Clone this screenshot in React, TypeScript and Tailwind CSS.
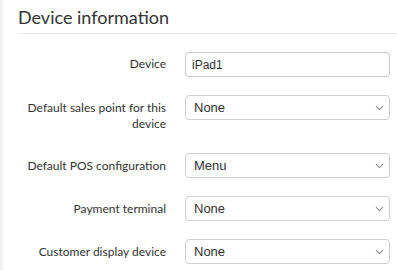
import React from "react";

const selectFields = [
  { label: "Default sales point for this device", value: "None" },
  { label: "Default POS configuration", value: "Menu" },
  { label: "Payment terminal", value: "None" },
  { label: "Customer display device", value: "None" },
];

const Chevron: React.FC = () => (
  <svg width="9" height="6" viewBox="0 0 9 6" className="shrink-0">
    <path d="M1 1.2 L4.5 4.6 L8 1.2" fill="none" stroke="#8a8a8a" strokeWidth="1.1" />
  </svg>
);

const App: React.FC = () => {
  return (
    <div className="flex h-[270px] w-[397px] overflow-hidden bg-white font-['Lato',sans-serif] text-[#333]">
      {/* strip of the parent panel */}
      <div className="w-[3px] shrink-0 bg-[#f2f2f2]" />

      <div className="flex-1 pl-[15px]">
        <h2 className="pt-[5px] text-[18px] leading-[24px] text-[#333]">Device information</h2>
        <div className="mt-[4px] h-px bg-[#ebebeb]" />

        <div className="mt-[18px] flex flex-col gap-[18px] pr-[7px]">
          <div className="flex items-start">
            <label className="w-[148px] shrink-0 pt-[4px] text-right text-[12px] leading-[16px]">Device</label>
            <input
              type="text"
              defaultValue="iPad1"
              className="ml-[19px] h-[25px] flex-1 rounded-[4px] border border-[#c8c8c8] px-[6px] font-['Liberation_Sans',sans-serif] text-[12px] text-[#333] focus:outline-none"
            />
          </div>

          {selectFields.map((f) => (
            <div key={f.label} className="flex items-start">
              <label className="w-[148px] shrink-0 pt-[5px] pb-[3px] text-right text-[12px] leading-[16px]">
                {f.label}
              </label>
              <div className="ml-[19px] flex h-[25px] flex-1 items-center justify-between rounded-[4px] border border-[#cfcfcf] pl-[8px] pr-[5px]">
                <span className="font-['Liberation_Sans',sans-serif] text-[13px] text-[#333]">{f.value}</span>
                <Chevron />
              </div>
            </div>
          ))}
        </div>
      </div>
    </div>
  );
};

export default App;
